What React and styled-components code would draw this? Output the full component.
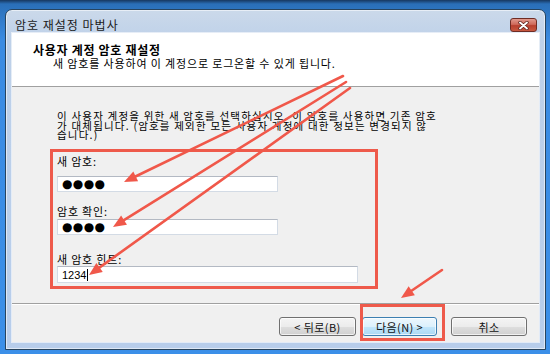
import styled, { createGlobalStyle } from 'styled-components';

const GlobalStyle = createGlobalStyle`
  html, body {
    margin: 0;
    padding: 0;
  }
  body {
    font-family: 'Noto Sans CJK KR', 'Noto Sans', sans-serif;
    color: #000;
  }
`;

const Desktop = styled.div`
  position: relative;
  width: 550px;
  height: 354px;
  box-sizing: border-box;
  padding: 9px 4px 4px 5px;
  background: linear-gradient(180deg, #17375f 0, #2a6fb8 4px, #3a8be2 40px, #3b8fe8 100%);
  overflow: hidden;
`;

const Window = styled.div`
  display: flex;
  flex-direction: column;
  height: 100%;
  box-sizing: border-box;
  padding: 0 6px 7px 6px;
  border: 1px solid #27445f;
  border-radius: 7px 7px 0 0;
  background: linear-gradient(180deg, #cbd9ea 0, #bed1e9 30px, #b7cdeb 100%);
  box-shadow: inset 0 0 0 1px rgba(255, 255, 255, 0.55);
`;

const TitleBar = styled.div`
  display: flex;
  align-items: flex-start;
  height: 23px;
  box-sizing: border-box;
  padding: 8px 2px 0 3px;
`;

const TitleText = styled.span`
  font-size: 12px;
  line-height: 14px;
  letter-spacing: 1px;
  color: #1b1b1b;
`;

const CloseButton = styled.div`
  margin-left: auto;
  width: 27px;
  height: 14px;
  box-sizing: border-box;
  display: flex;
  align-items: center;
  justify-content: center;
  border: 1px solid #6e2c24;
  border-radius: 3px;
  background: linear-gradient(180deg, #e19a8e 0, #cf6a5b 45%, #b8402f 55%, #c8583f 100%);
`;

const Client = styled.div`
  flex: 1;
  display: flex;
  flex-direction: column;
  background: #f0f0f0;
  box-shadow: 0 0 0 1px rgba(255, 255, 255, 0.6);
`;

const Header = styled.div`
  height: 54px;
  padding: 10px 0 0 21px;
  box-sizing: border-box;
  background: #fff;
  border-bottom: 1px solid #a0a0a0;
`;

const HeaderTitle = styled.div`
  font-size: 12px;
  line-height: 13px;
  font-weight: 700;
  letter-spacing: 0.7px;
`;

const HeaderSub = styled.div`
  margin-left: 20px;
  margin-top: 1px;
  font-size: 11px;
  line-height: 13px;
  letter-spacing: 0.85px;
`;

const Body = styled.div`
  flex: 1;
  padding: 24px 0 0 38px;
`;

const Intro = styled.p`
  margin: 0 0 9.5px 7px;
  font-size: 10.5px;
  line-height: 9.5px;
  letter-spacing: 1.2px;
  white-space: nowrap;
`;

const FieldGroup = styled.div`
  width: 328px;
  height: 140px;
  box-sizing: border-box;
  padding: 2px 0 0 4px;
  border: 3px solid #ee5a4b;
`;

const Label = styled.div`
  margin-top: ${(p) => p.$top}px;
  font-size: 11px;
  line-height: 14px;
  letter-spacing: 0.8px;
`;

const TextBox = styled.div`
  margin-top: ${(p) => p.$top}px;
  width: ${(p) => p.$width}px;
  height: ${(p) => p.$height}px;
  box-sizing: border-box;
  display: flex;
  align-items: center;
  padding-left: 4px;
  background: #fff;
  border: 1px solid #d3dbe5;
  border-top-color: #b3b9c3;
`;

const Dots = styled.span`
  font-family: 'DejaVu Sans', sans-serif;
  font-size: 12px;
  line-height: 14px;
  letter-spacing: 0.4px;
`;

const HintText = styled.span`
  font-family: 'Liberation Sans', Arial, sans-serif;
  font-size: 11px;
  line-height: 14px;
`;

const Caret = styled.span`
  display: inline-block;
  width: 1px;
  height: 12px;
  margin-left: 1px;
  background: #000;
`;

const Footer = styled.div`
  height: 39px;
  box-sizing: border-box;
  display: flex;
  justify-content: flex-end;
  align-items: flex-start;
  padding: 13px 12px 0 0;
  border-top: 1px solid #a0a0a0;
  box-shadow: inset 0 1px 0 #fff;
`;

const Button = styled.div`
  width: ${(p) => p.$width}px;
  height: 19px;
  margin-left: ${(p) => p.$gap}px;
  box-sizing: border-box;
  display: flex;
  align-items: center;
  justify-content: center;
  font-size: 11px;
  letter-spacing: 0.4px;
  color: #111;
  border: 1px solid ${(p) => (p.$active ? '#3c7fb1' : '#707070')};
  border-radius: 3px;
  background: ${(p) =>
    p.$active
      ? 'linear-gradient(180deg, #edf7fd 0, #dcf1fc 50%, #c2e6fb 51%, #abd9f4 100%)'
      : 'linear-gradient(180deg, #f4f4f4 0, #ececec 50%, #dedede 51%, #d0d0d0 100%)'};
  box-shadow: inset 0 0 0 1px rgba(255, 255, 255, 0.7);
`;

const Highlight = styled.div`
  position: relative;
  margin-left: 6px;

  &::after {
    content: '';
    position: absolute;
    left: -2px;
    right: -8px;
    top: -13px;
    bottom: -5px;
    border: 3px solid #ee5a4b;
    pointer-events: none;
  }
`;

const Overlay = styled.svg`
  position: absolute;
  left: 0;
  top: 0;
  pointer-events: none;
`;

const arrows = [
  [343, 76, 124, 182],
  [346, 82, 113, 227],
  [350, 88, 89, 275],
  [442, 270, 401, 298],
];

const Arrow = ({ x1, y1, x2, y2 }) => {
  const dx = x2 - x1;
  const dy = y2 - y1;
  const len = Math.hypot(dx, dy);
  const ux = dx / len;
  const uy = dy / len;
  const head = 13;
  const half = 5.5;
  const bx = x2 - ux * head;
  const by = y2 - uy * head;
  const pts = `${x2},${y2} ${bx - uy * half},${by + ux * half} ${bx + uy * half},${by - ux * half}`;
  return (
    <g>
      <line x1={x1} y1={y1} x2={bx + ux * 2} y2={by + uy * 2} stroke="#f0584a" strokeWidth="2.6" strokeLinecap="round" />
      <polygon points={pts} fill="#f0584a" />
    </g>
  );
};

const App = () => {
  return (
    <Desktop>
      <GlobalStyle />
      <Window>
        <TitleBar>
          <TitleText>암호 재설정 마법사</TitleText>
          <CloseButton>
            <svg width="11" height="9" viewBox="0 0 11 9">
              <path d="M2 1.5 L9 7.5 M9 1.5 L2 7.5" stroke="#5a211b" strokeWidth="3.4" strokeLinecap="round" />
              <path d="M2 1.5 L9 7.5 M9 1.5 L2 7.5" stroke="#fff" strokeWidth="1.9" strokeLinecap="round" />
            </svg>
          </CloseButton>
        </TitleBar>
        <Client>
          <Header>
            <HeaderTitle>사용자 계정 암호 재설정</HeaderTitle>
            <HeaderSub>새 암호를 사용하여 이 계정으로 로그온할 수 있게 됩니다.</HeaderSub>
          </Header>
          <Body>
            <Intro>
              이 사용자 계정을 위한 새 암호를 선택하십시오. 이 암호를 사용하면 기존 암호
              <br />
              가 대체됩니다. (암호를 제외한 모든 사용자 계정에 대한 정보는 변경되지 않
              <br />
              습니다.)
            </Intro>
            <FieldGroup>
              <Label $top={0}>새 암호:</Label>
              <TextBox $top={8} $width={221} $height={16}>
                <Dots>●●●●</Dots>
              </TextBox>
              <Label $top={12}>암호 확인:</Label>
              <TextBox $top={1} $width={221} $height={16}>
                <Dots>●●●●</Dots>
              </TextBox>
              <Label $top={17}>새 암호 힌트:</Label>
              <TextBox $top={0} $width={301} $height={17}>
                <HintText>1234</HintText>
                <Caret />
              </TextBox>
            </FieldGroup>
          </Body>
          <Footer>
            <Button $width={77} $gap={0}>&lt; 뒤로(B)</Button>
            <Highlight>
              <Button $width={75} $gap={0} $active>
                다음(N) &gt;
              </Button>
            </Highlight>
            <Button $width={76} $gap={14}>취소</Button>
          </Footer>
        </Client>
      </Window>
      <Overlay width="550" height="354" viewBox="0 0 550 354">
        {arrows.map(([x1, y1, x2, y2], i) => (
          <Arrow key={i} x1={x1} y1={y1} x2={x2} y2={y2} />
        ))}
      </Overlay>
    </Desktop>
  );
};

export default App;
